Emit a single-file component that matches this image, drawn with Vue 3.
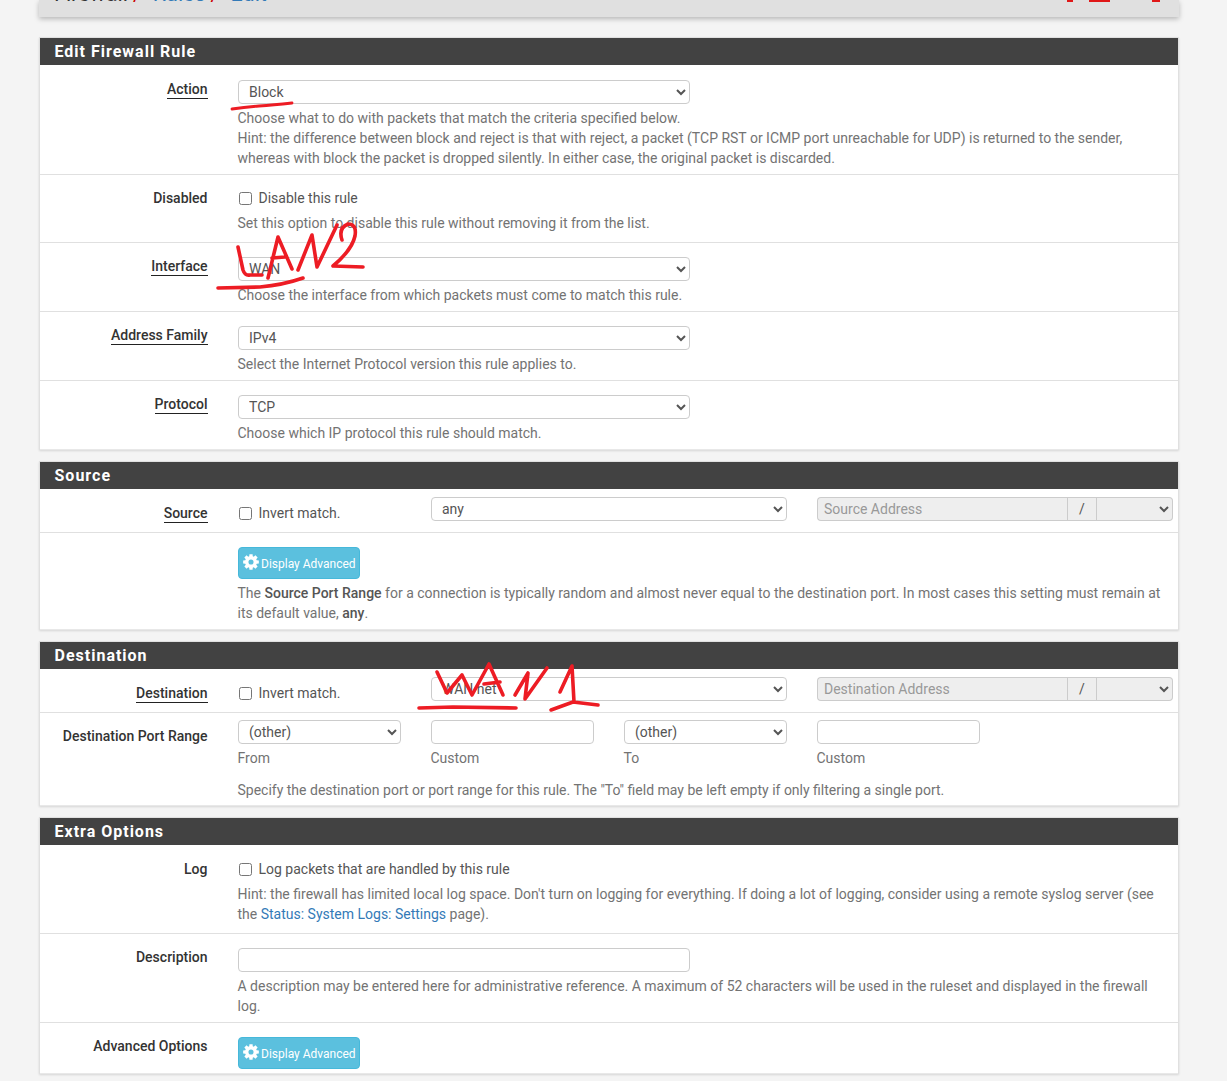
<script setup>
const teeth = 8
let d = ''
for (let i = 0; i < teeth; i++) {
  const a = (i / teeth) * Math.PI * 2
  const pts = [[-0.3, 7.4], [-0.2, 10], [0.2, 10], [0.3, 7.4]]
  const b = pts.map(([o, r]) => `${(r * Math.cos(a + o)).toFixed(2)} ${(r * Math.sin(a + o)).toFixed(2)}`)
  d += (i === 0 ? 'M' : 'L') + b.join('L')
}
d += 'Z M3.2 0A3.2 3.2 0 1 0 -3.2 0A3.2 3.2 0 1 0 3.2 0Z'
const gear = d
</script>

<template>
  <div class="page">
    <header class="crumbs">
      <h2><span class="c1">Firewall</span><i>/</i><a>Rules</a><i>/</i><a>Edit</a></h2>
      <div class="tools">
        <span class="tip t1"></span>
        <span class="tip t2"></span>
        <span class="tip t3"></span>
      </div>
    </header>

    <section class="panel">
      <h3>Edit Firewall Rule</h3>
      <div class="row">
        <div class="lab lab14"><b class="req">Action</b></div>
        <div class="ctl pt15">
          <select class="sel w452"><option>Block</option></select>
          <p class="help">Choose what to do with packets that match the criteria specified below.<br>Hint: the difference between block and reject is that with reject, a packet (TCP RST or ICMP port unreachable for UDP) is returned to the sender, whereas with block the packet is dropped silently. In either case, the original packet is discarded.</p>
        </div>
      </div>
      <div class="row pb9">
        <div class="lab"><b>Disabled</b></div>
        <div class="ctl pt13">
          <label class="chk"><input type="checkbox">Disable this rule</label>
          <p class="help mt5">Set this option to disable this rule without removing it from the list.</p>
        </div>
      </div>
      <div class="row">
        <div class="lab"><b class="req">Interface</b></div>
        <div class="ctl pt14">
          <select class="sel w452"><option>WAN</option></select>
          <p class="help">Choose the interface from which packets must come to match this rule.</p>
        </div>
      </div>
      <div class="row">
        <div class="lab"><b class="req">Address Family</b></div>
        <div class="ctl pt14">
          <select class="sel w452"><option>IPv4</option></select>
          <p class="help">Select the Internet Protocol version this rule applies to.</p>
        </div>
      </div>
      <div class="row last">
        <div class="lab"><b class="req">Protocol</b></div>
        <div class="ctl pt14">
          <select class="sel w452"><option>TCP</option></select>
          <p class="help">Choose which IP protocol this rule should match.</p>
        </div>
      </div>
    </section>

    <section class="panel">
      <h3>Source</h3>
      <div class="row">
        <div class="lab lab14"><b class="req">Source</b></div>
        <div class="ctl pt8 cols pb3">
          <label class="chk down"><input type="checkbox">Invert match.</label>
          <select class="sel span2"><option>any</option></select>
          <div class="group span2">
            <input class="addr" placeholder="Source Address">
            <span class="slash">/</span>
            <select class="sel mask"><option></option></select>
          </div>
        </div>
      </div>
      <div class="row last">
        <div class="lab"></div>
        <div class="ctl pt14">
          <button class="btn"><svg width="16" height="16" viewBox="-10 -10 20 20"><path :d="gear" fill="#fff" fill-rule="evenodd"/></svg>Display Advanced</button>
          <p class="help">The <strong>Source Port Range</strong> for a connection is typically random and almost never equal to the destination port. In most cases this setting must remain at its default value, <strong>any</strong>.</p>
        </div>
      </div>
    </section>

    <section class="panel">
      <h3>Destination</h3>
      <div class="row">
        <div class="lab lab14"><b class="req">Destination</b></div>
        <div class="ctl pt8 cols pb3">
          <label class="chk down"><input type="checkbox">Invert match.</label>
          <select class="sel span2"><option>WAN net</option></select>
          <div class="group span2">
            <input class="addr" placeholder="Destination Address">
            <span class="slash">/</span>
            <select class="sel mask"><option></option></select>
          </div>
        </div>
      </div>
      <div class="row last tight">
        <div class="lab"><b>Destination Port Range</b></div>
        <div class="ctl pt7">
          <div class="cols">
            <div class="stack"><select class="sel"><option>(other)</option></select><span class="help sub">From</span></div>
            <div class="stack"><input class="txt"><span class="help sub">Custom</span></div>
            <div class="stack"><select class="sel"><option>(other)</option></select><span class="help sub">To</span></div>
            <div class="stack"><input class="txt"><span class="help sub">Custom</span></div>
          </div>
          <p class="help mt12">Specify the destination port or port range for this rule. The "To" field may be left empty if only filtering a single port.</p>
        </div>
      </div>
    </section>

    <section class="panel">
      <h3>Extra Options</h3>
      <div class="row pb9">
        <div class="lab lab14"><b>Log</b></div>
        <div class="ctl pt14">
          <label class="chk"><input type="checkbox">Log packets that are handled by this rule</label>
          <p class="help mt5">Hint: the firewall has limited local log space. Don't turn on logging for everything. If doing a lot of logging, consider using a remote syslog server (see the <a class="link">Status: System Logs: Settings</a> page).</p>
        </div>
      </div>
      <div class="row">
        <div class="lab"><b>Description</b></div>
        <div class="ctl pt14">
          <input class="txt w452">
          <p class="help">A description may be entered here for administrative reference. A maximum of 52 characters will be used in the ruleset and displayed in the firewall log.</p>
        </div>
      </div>
      <div class="row last pb5">
        <div class="lab"><b>Advanced Options</b></div>
        <div class="ctl pt14">
          <button class="btn"><svg width="16" height="16" viewBox="-10 -10 20 20"><path :d="gear" fill="#fff" fill-rule="evenodd"/></svg>Display Advanced</button>
        </div>
      </div>
    </section>

    <svg class="ink" width="1227" height="1081" viewBox="0 0 1227 1081" fill="none" stroke="#ed1c24" stroke-width="3.6" stroke-linecap="round" stroke-linejoin="round">
      <path d="M232 109Q245 107 259 106T292 103" stroke-width="2.8"/>
      <path d="M238 247L243 270Q245 276 250 275L262 275"/>
      <path d="M268 278L278 237L292 269M272 258L285 257"/>
      <path d="M298 270L312 235L317 267L337 225"/>
      <path d="M342 240Q338 228 348 224Q357 224 355 236Q352 250 333 266L363 267"/>
      <path d="M218 288L260 287Q283 285 303 278"/>
      <path d="M437 672L447 693L462 675L472 695L489 664L503 695M484 684L500 682"/>
      <path d="M515 695L528 673L525 699L547 668"/>
      <path d="M560 692L572 666L574 702M551 710L573 702L598 705"/>
      <path d="M419 708L453 707L516 708"/>
    </svg>
  </div>
</template>

<style>
html, body { margin: 0; background: #f4f4f4; }
</style>

<style scoped>
.page {
  position: relative;
  width: 1227px;
  height: 1081px;
  overflow: hidden;
  background: #f4f4f4;
  font-family: Roboto, "Liberation Sans", sans-serif;
  font-size: 14px;
  line-height: 20px;
  color: #333;
}
.crumbs {
  display: flex;
  justify-content: space-between;
  width: 1140px;
  height: 17px;
  margin: 0 0 20px 39px;
  background: #e0e0e0;
  box-shadow: 0 2px 5px rgba(0, 0, 0, .25);
  overflow: hidden;
}
.crumbs h2 {
  margin: -18px 0 0 15px;
  font-size: 21.5px;
  font-weight: 400;
  line-height: 24px;
  height: 24px;
  color: #333;
  white-space: nowrap;
}
.crumbs i { font-style: normal; color: #c00; margin: 0 11px 0 5px; }
.crumbs a { color: #337ab7; }
.tools { display: flex; align-items: flex-start; padding-right: 19px; }
.tip { display: block; height: 2px; background: #e01818; }
.t1 { width: 6px; }
.t2 { width: 21px; margin-left: 16px; }
.t3 { width: 8px; margin-left: 42px; }
.panel {
  width: 1138px;
  margin: 0 0 11px 39px;
  background: #fff;
  border: 1px solid #e0e0e0;
  border-bottom: 0;
  box-shadow: 0 1px 2px rgba(0, 0, 0, .12);
}
h3 {
  margin: 0;
  height: 27px;
  padding-left: 14.5px;
  background: #424242;
  color: #fff;
  font-size: 16px;
  font-weight: 700;
  line-height: 27px;
  letter-spacing: 1px;
}
.row {
  display: flex;
  gap: 30px;
  padding-bottom: 6px;
  border-bottom: 1px solid #e0e0e0;
}
.row.last { border-bottom: 1px solid #e8e8e8; }
.row.pb9 { padding-bottom: 9px; }
.row.pb5 { padding-bottom: 4px; }
.row.tight { padding-bottom: 5px; }
.lab {
  flex: 0 0 168px;
  padding-top: 13px;
  text-align: right;
}
.lab.lab14 { padding-top: 14px; }
.lab b { font-weight: 500; color: #333; margin-right: .5px; }
.lab b.req { border-bottom: 1px solid #222; padding-bottom: 1px; }
.ctl { flex: 0 0 935px; width: 935px; }
.pt15 { padding-top: 15px; }
.pt14 { padding-top: 14px; }
.pt13 { padding-top: 13px; }
.pt8 { padding-top: 8px; }
.pt7 { padding-top: 7px; }
.pb3 { padding-bottom: 3px; }
.cols {
  display: grid;
  grid-template-columns: repeat(5, 163px);
  column-gap: 30px;
}
.span2 { grid-column: span 2; }
.sel, .txt, .addr {
  box-sizing: border-box;
  height: 24px;
  margin: 0;
  border: 1px solid #ccc;
  border-radius: 4px;
  background: #fff;
  color: #555;
  font: 14px/20px Roboto, "Liberation Sans", sans-serif;
  padding: 0 6px;
  outline: none;
}
.sel { display: block; width: 100%; padding-right: 7px; }
.txt { display: block; width: 100%; }
.w452 { width: 452px; }
.help { margin: 4px 0 0 -.5px; color: #737373; }
.mt5 { margin-top: 5px; }
.mt12 { margin-top: 12px; }
.sub { display: block; }
.stack { display: flex; flex-direction: column; }
.chk {
  display: flex;
  align-items: center;
  height: 20px;
  color: #555;
}
.chk.down { margin-top: 6px; }
.chk input { width: 13px; height: 13px; margin: 1px 6.5px 0 1px; }
.group { display: flex; }
.addr {
  flex: 0 0 250px;
  width: 250px;
  background: #eee;
  border-radius: 4px 0 0 4px;
  border-right: 0;
}
.addr::placeholder { color: #999; opacity: 1; }
.slash {
  box-sizing: border-box;
  flex: 0 0 30px;
  height: 24px;
  border: 1px solid #ccc;
  background: #eee;
  text-align: center;
  color: #555;
  line-height: 22px;
}
.mask {
  flex: 0 0 76px;
  width: 76px;
  background: #eee;
  border-left: 0;
  border-radius: 0 4px 4px 0;
}
.btn {
  display: flex;
  align-items: center;
  box-sizing: border-box;
  width: 122px;
  height: 32px;
  padding: 2px 0 0 4px;
  border: 1px solid #46b8da;
  border-radius: 4px;
  background: #5bc0de;
  color: #fff;
  font: 12px/20px Roboto, "Liberation Sans", sans-serif;
  white-space: nowrap;
}
.btn svg { margin: -4px 2px 0 0; flex: none; }
strong { font-weight: 500; color: #555; }
.link { color: #337ab7; }
.ink { position: absolute; left: 0; top: 0; pointer-events: none; }
</style>
